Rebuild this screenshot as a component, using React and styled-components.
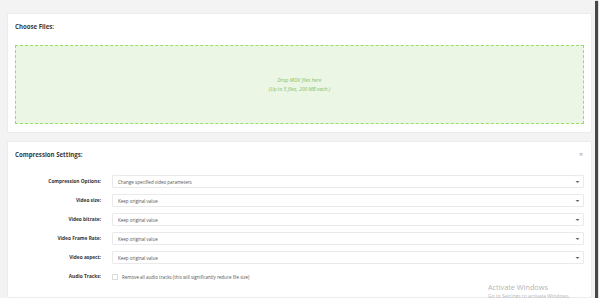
import React from "react";
import styled, { createGlobalStyle } from "styled-components";

const Global = createGlobalStyle`
  html, body { margin: 0; padding: 0; background: #ffffff; }
  body { font-family: "Open Sans", "Noto Sans", Arial, sans-serif; }
  * { box-sizing: border-box; }
`;

const Frame = styled.div`
  position: relative;
  width: 595px;
  height: 298px;
  background: #f3f3f3;
  box-shadow: 2px 2px 1px 1px rgba(40, 40, 40, 0.85);
  overflow: hidden;
  padding: 13px 3px 0 7px;
  display: flex;
  flex-direction: column;
  gap: 8px;
`;

const Card = styled.section`
  background: #ffffff;
  border: 1px solid #ececec;
  border-radius: 2px;
  padding: ${(p) => p.$pad};
  flex: ${(p) => (p.$grow ? "1" : "none")};
`;

const Header = styled.div`
  display: flex;
  align-items: center;
  justify-content: space-between;
  height: 10px;
`;

const Title = styled.h2`
  margin: 0;
  font-size: 6.1px;
  line-height: 10px;
  font-weight: 700;
  color: #3a3a3a;
`;

const Close = styled.span`
  font-size: 7px;
  line-height: 10px;
  color: #999;
  margin-right: 1px;
`;

const DropZone = styled.div`
  margin-top: 13px;
  height: 79px;
  background: #ecf6e5;
  border: 1px dashed #93e064;
  display: flex;
  flex-direction: column;
  align-items: center;
  justify-content: center;
  font-style: italic;
  font-size: 5px;
  line-height: 9px;
  color: #86c060;
`;

const Form = styled.div`
  margin-top: 15px;
  display: grid;
  grid-template-columns: 86px 1fr;
  column-gap: 11px;
  row-gap: 6px;
  align-items: center;
`;

const Label = styled.div`
  text-align: right;
  font-size: 4.8px;
  font-weight: 700;
  color: #333;
  line-height: 13px;
`;

const Select = styled.div`
  height: 13px;
  border: 1px solid #eaeaea;
  border-radius: 1px;
  display: flex;
  align-items: center;
  justify-content: space-between;
  padding: 0 3px 0 5px;
  font-size: 4.5px;
  color: #555;
`;

const Caret = styled.svg`
  width: 5px;
  height: 4px;
  flex: none;
`;

const CheckRow = styled.label`
  display: flex;
  align-items: center;
  gap: 4px;
  height: 13px;
  font-size: 4.5px;
  color: #555;
`;

const Box = styled.span`
  width: 6px;
  height: 6px;
  border: 1px solid #dcdcdc;
  background: #fff;
  flex: none;
`;

const Watermark = styled.div`
  position: absolute;
  left: 488px;
  top: 283px;
  color: #b5b5b5;
  font-family: "Open Sans", "Noto Sans", sans-serif;
  line-height: 9px;
  white-space: nowrap;
`;

const WmTitle = styled.div`
  font-size: 7.3px;
`;

const WmSub = styled.div`
  font-size: 5px;
`;

const rows = [
  ["Compression Options:", "Change specified video parameters"],
  ["Video size:", "Keep original value"],
  ["Video bitrate:", "Keep original value"],
  ["Video Frame Rate:", "Keep original value"],
  ["Video aspect:", "Keep original value"],
];

export default function App() {
  return (
    <>
      <Global />
      <Frame>
        <Card $pad="8px 7px 8px 7px">
          <Header>
            <Title>Choose Files:</Title>
          </Header>
          <DropZone>
            <div>Drop MOV files here</div>
            <div>(Up to 5 files, 200 MB each.)</div>
          </DropZone>
        </Card>
        <Card $pad="8px 7px 8px 7px" $grow>
          <Header>
            <Title>Compression Settings:</Title>
            <Close>×</Close>
          </Header>
          <Form>
            {rows.map(([l, v]) => (
              <React.Fragment key={l}>
                <Label>{l}</Label>
                <Select>
                  <span>{v}</span>
                  <Caret viewBox="0 0 10 8">
                    <path d="M1 2 L5 6 L9 2 Z" fill="#666" />
                  </Caret>
                </Select>
              </React.Fragment>
            ))}
            <Label>Audio Tracks:</Label>
            <CheckRow>
              <Box />
              <span>Remove all audio tracks (this will significantly reduce file size)</span>
            </CheckRow>
          </Form>
        </Card>
        <Watermark>
          <WmTitle>Activate Windows</WmTitle>
          <WmSub>Go to Settings to activate Windows.</WmSub>
        </Watermark>
      </Frame>
    </>
  );
}
